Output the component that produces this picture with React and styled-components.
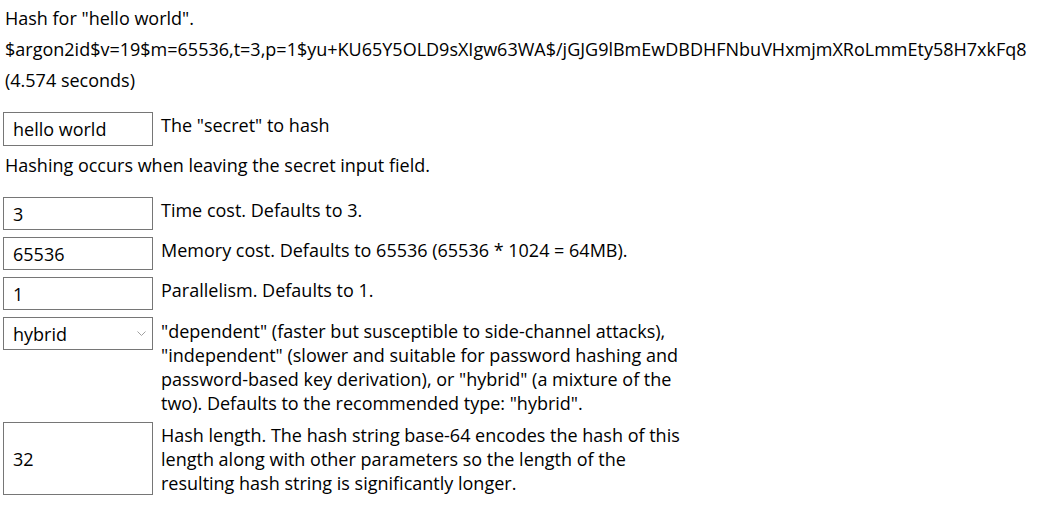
import React from "react"
import styled, { createGlobalStyle } from "styled-components"

const Global = createGlobalStyle`
  body {
    margin: 0;
    background: #ffffff;
    color: #000000;
    font-family: "Open Sans", "Noto Sans", sans-serif;
    font-size: 18px;
  }
`

const Page = styled.div`
  display: flex;
  flex-direction: column;
  padding: 6px 0 0 5px;
`

const Line = styled.div`
  line-height: 24px;
  margin-bottom: ${(p) => p.$gap || 7}px;
  white-space: nowrap;
`

const Row = styled.div`
  display: flex;
  align-items: ${(p) => (p.$center ? "center" : "flex-start")};
  gap: 8px;
  margin: 0 0 ${(p) => p.$gap || 7}px -2px;
`

const Field = styled.input`
  box-sizing: border-box;
  width: 150px;
  height: ${(p) => p.$h || 34}px;
  flex: none;
  margin: 0;
  padding: 0 9px;
  border: 1px solid #767676;
  border-radius: 0;
  font: inherit;
  color: #000;
  background: #fff;
  outline: none;
`

const SelectBox = styled.div`
  box-sizing: border-box;
  position: relative;
  width: 150px;
  height: 33px;
  flex: none;
  border: 1px solid #767676;
  display: flex;
  align-items: center;
  padding: 0 9px;
`

const Chevron = styled.svg`
  position: absolute;
  right: 6px;
  top: 13px;
`

const Label = styled.div`
  line-height: 24px;
  width: 520px;
  padding-top: ${(p) => (p.$pad !== undefined ? p.$pad : 1)}px;
`

export default function App() {
  return (
    <Page>
      <Global />
      <Line>Hash for "hello world".</Line>
      <Line>$argon2id$v=19$m=65536,t=3,p=1$yu+KU65Y5OLD9sXIgw63WA$/jGJG9lBmEwDBDHFNbuVHxmjmXRoLmmEty58H7xkFq8</Line>
      <Line $gap={20}>(4.574 seconds)</Line>

      <Row>
        <Field defaultValue="hello world" />
        <Label>The "secret" to hash</Label>
      </Row>
      <Line $gap={20}>Hashing occurs when leaving the secret input field.</Line>

      <Row>
        <Field defaultValue="3" $h={33} />
        <Label>Time cost. Defaults to 3.</Label>
      </Row>
      <Row>
        <Field defaultValue="65536" $h={33} />
        <Label>Memory cost. Defaults to 65536 (65536 * 1024 = 64MB).</Label>
      </Row>
      <Row>
        <Field defaultValue="1" $h={33} />
        <Label>Parallelism. Defaults to 1.</Label>
      </Row>
      <Row $gap={7}>
        <SelectBox>
          hybrid
          <Chevron width="9" height="6" viewBox="0 0 9 6">
            <path d="M0.5 0.5 L4.5 4.5 L8.5 0.5" fill="none" stroke="#a0a0a0" strokeWidth="1" />
          </Chevron>
        </SelectBox>
        <Label $pad={2}>
          "dependent" (faster but susceptible to side-channel attacks), "independent" (slower and
          suitable for password hashing and password-based key derivation), or "hybrid" (a mixture
          of the two). Defaults to the recommended type: "hybrid".
        </Label>
      </Row>
      <Row $center>
        <Field defaultValue="32" $h={73} />
        <Label $pad={0}>
          Hash length. The hash string base-64 encodes the hash of this length along with other
          parameters so the length of the resulting hash string is significantly longer.
        </Label>
      </Row>
    </Page>
  )
}
